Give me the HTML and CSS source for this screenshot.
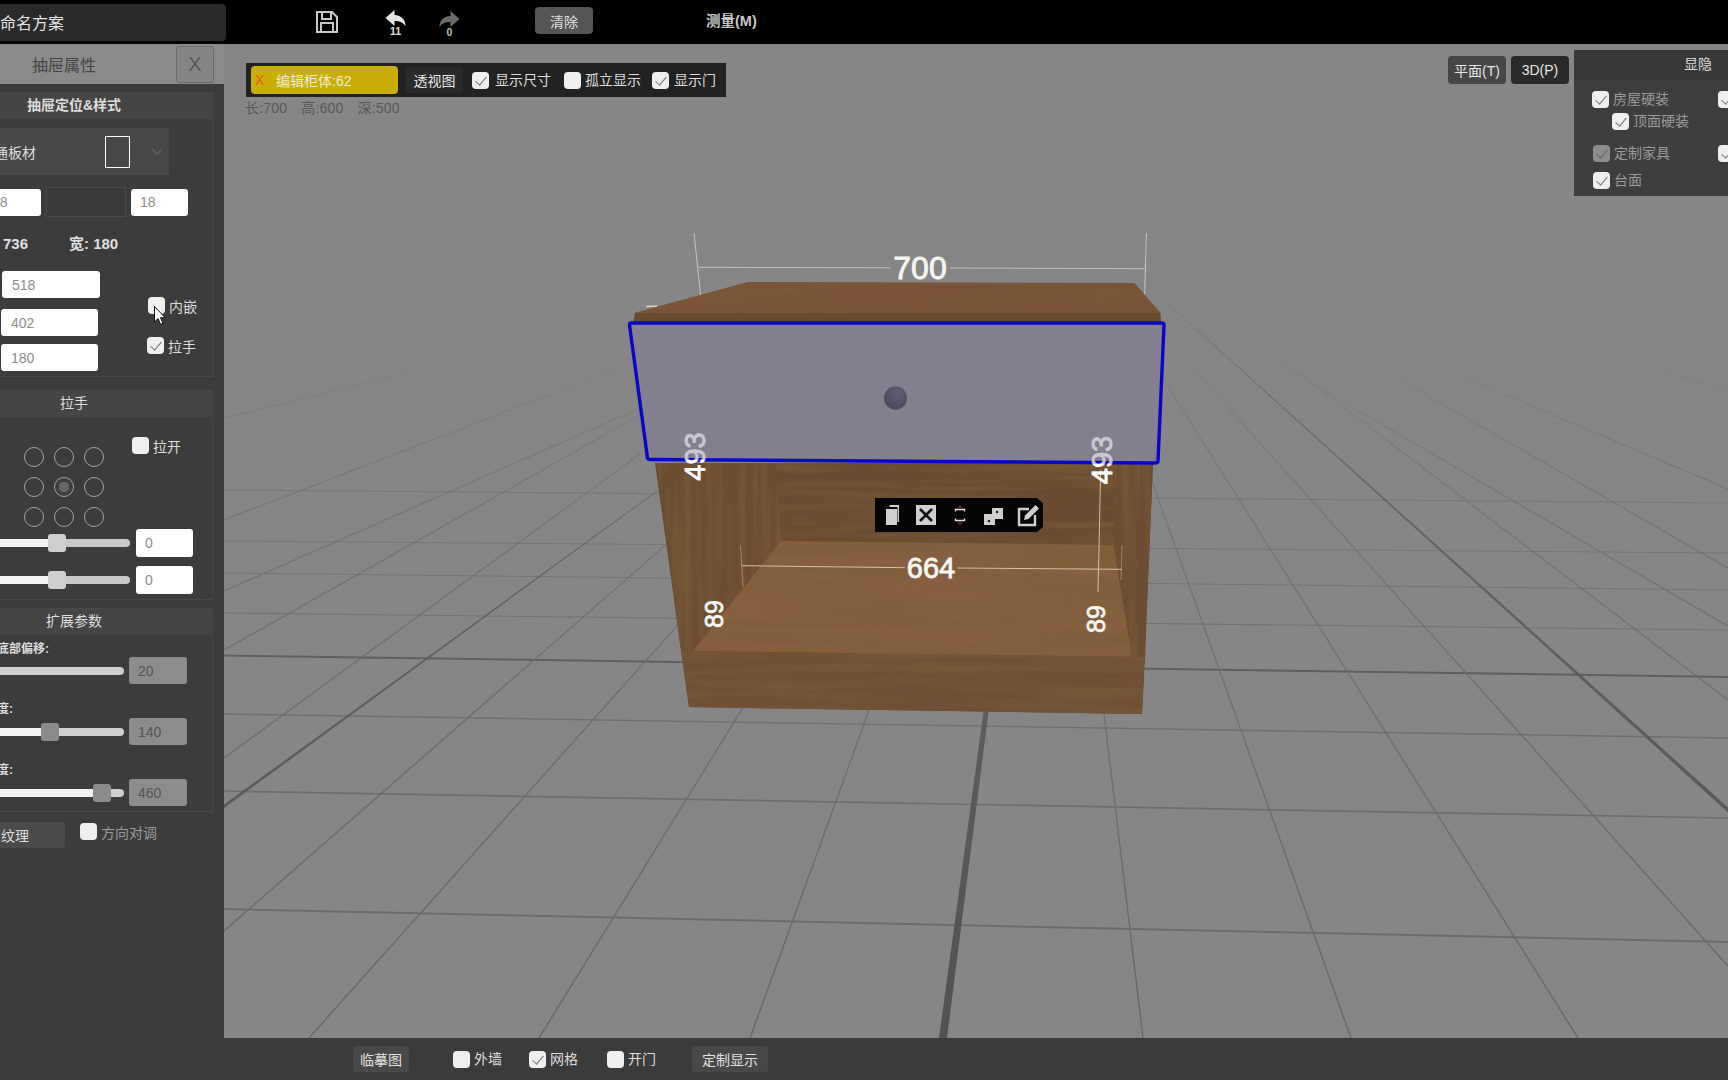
FILE: index.html
```html
<!DOCTYPE html>
<html lang="zh">
<head>
<meta charset="utf-8">
<title>抽屉属性</title>
<link rel="stylesheet" href="styles.css">
</head>
<body>
<div class="app">
  <header class="topbar">
    <div class="plan-name">命名方案</div>
    <svg class="ico-save" viewBox="0 0 22 22"><path d="M1 1H16L21 6V21H1Z M6 1V8H15V1 M5 21V12H17V21" fill="none" stroke="#c8c8c8" stroke-width="2"/></svg>
    <div class="history hist-undo">
      <svg viewBox="0 0 20 17"><path d="M0 8L9 0V5C15 5 20 9 20 16C17 12 14 11 9 11V16Z" fill="#e4e4e4"/></svg>
      <span>11</span>
    </div>
    <div class="history hist-redo">
      <svg viewBox="0 0 20 17"><path d="M20 8L11 0V5C5 5 0 9 0 16C3 12 6 11 11 11V16Z" fill="#6a6a6a"/></svg>
      <span>0</span>
    </div>
    <button class="btn-clear">清除</button>
    <div class="measure">测量(M)</div>
  </header>

  <aside class="panel">
    <div class="panel-title"><span>抽屉属性</span><button class="panel-close">X</button></div>
    <div class="panel-inner">
      <section class="sec sec-style">
        <h3 class="sec-head">抽屉定位&amp;样式</h3>
        <div class="select"><span>普通板材</span><i class="swatch"></i>
          <svg class="chev" viewBox="0 0 12 8"><path d="M1 1L6 6L11 1" fill="none" stroke="#5c5c5c" stroke-width="2"/></svg>
        </div>
        <div class="row-fields">
          <div class="field f-a">18</div>
          <div class="field-dark"></div>
          <div class="field f-b">18</div>
        </div>
        <div class="stats"><span class="st-a">长: 736</span><span class="st-b">宽: 180</span></div>
        <div class="dims">
          <div class="dims-col">
            <div class="field f-dim">518</div>
            <div class="field f-dim f-dim2">402</div>
            <div class="field f-dim f-dim3">180</div>
          </div>
          <div class="dims-checks">
            <label class="chk"><i class="cb"></i>内嵌</label>
            <label class="chk chk-shift"><i class="cb on"></i>拉手</label>
          </div>
        </div>
      </section>

      <section class="sec sec-handle">
        <h3 class="sec-head">拉手</h3>
        <div class="handle-top">
          <div class="dots">
            <i></i><i></i><i></i>
            <i></i><i class="sel"></i><i></i>
            <i></i><i></i><i></i>
          </div>
          <label class="chk chk-open"><i class="cb"></i>拉开</label>
        </div>
        <div class="slide-row sr-first">
          <div class="track"><b class="fill" style="width:122px"></b><i class="thumb" style="left:112px"></i></div>
          <div class="field f-small">0</div>
        </div>
        <div class="slide-row sr-second">
          <div class="track"><b class="fill" style="width:122px"></b><i class="thumb" style="left:112px"></i></div>
          <div class="field f-small">0</div>
        </div>
      </section>

      <section class="sec sec-ext">
        <h3 class="sec-head">扩展参数</h3>
        <div class="ext-label el-first">底部偏移:</div>
        <div class="slide-row ext-row">
          <div class="track t-ext"></div>
          <div class="field f-off">20</div>
        </div>
        <div class="ext-label el-short">高度:</div>
        <div class="slide-row ext-row">
          <div class="track t-ext"><b class="fill" style="width:105px"></b><i class="thumb dim" style="left:105px"></i></div>
          <div class="field f-off">140</div>
        </div>
        <div class="ext-label el-short">深度:</div>
        <div class="slide-row ext-row">
          <div class="track t-ext"><b class="fill" style="width:165px"></b><i class="thumb dim" style="left:157px"></i></div>
          <div class="field f-off">460</div>
        </div>
      </section>

      <div class="tex-row">
        <button class="btn-tex">纹理</button>
        <label class="chk chk-muted"><i class="cb"></i>方向对调</label>
      </div>
    </div>
    <svg class="cursor" viewBox="0 0 12 19"><path d="M0.5 0.5V16L4 12.6L6.6 18.4L9 17.3L6.5 11.7H11.2Z" fill="#fff" stroke="#111" stroke-width="1"/></svg>
  </aside>

  <main class="stage">
    <svg class="scene" viewBox="224 44 1504 994" preserveAspectRatio="none">
      <defs>
        <linearGradient id="gridFade" gradientUnits="userSpaceOnUse" x1="0" y1="330" x2="0" y2="1038">
          <stop offset="0" stop-color="#6c6c6c" stop-opacity="0"/>
          <stop offset=".22" stop-color="#6c6c6c" stop-opacity=".5"/>
          <stop offset=".5" stop-color="#6c6c6c" stop-opacity=".85"/>
          <stop offset="1" stop-color="#686868"/>
        </linearGradient>
        <linearGradient id="gridStrong" gradientUnits="userSpaceOnUse" x1="0" y1="300" x2="0" y2="1038">
          <stop offset="0" stop-color="#5a5a5a" stop-opacity=".2"/>
          <stop offset=".3" stop-color="#5a5a5a" stop-opacity=".8"/>
          <stop offset="1" stop-color="#515151"/>
        </linearGradient>
        <linearGradient id="behindL"><stop offset="0" stop-color="#fff"/><stop offset=".42" stop-color="#fff"/><stop offset=".42" stop-color="#c9c9d6"/><stop offset="1" stop-color="#c9c9d6"/></linearGradient>
        <radialGradient id="knob" cx=".6" cy=".3" r=".8"><stop offset="0" stop-color="#5f5e74"/><stop offset="1" stop-color="#46455a"/></radialGradient>
        <filter id="grainH" x="0" y="0" width="100%" height="100%">
          <feTurbulence type="fractalNoise" baseFrequency=".006 .11" numOctaves="3" seed="4"/>
          <feColorMatrix type="matrix" values="0 0 0 0 .2  0 0 0 0 .11  0 0 0 0 .04  1.4 0 0 0 -.48"/>
          <feComposite in2="SourceGraphic" operator="in" result="g"/>
          <feMerge><feMergeNode in="SourceGraphic"/><feMergeNode in="g"/></feMerge>
        </filter>
        <filter id="grainV" x="0" y="0" width="100%" height="100%">
          <feTurbulence type="fractalNoise" baseFrequency=".13 .006" numOctaves="3" seed="9"/>
          <feColorMatrix type="matrix" values="0 0 0 0 .2  0 0 0 0 .11  0 0 0 0 .04  1.4 0 0 0 -.48"/>
          <feComposite in2="SourceGraphic" operator="in" result="g"/>
          <feMerge><feMergeNode in="SourceGraphic"/><feMergeNode in="g"/></feMerge>
        </filter>
      </defs>

      <rect x="224" y="44" width="1504" height="994" fill="#868686"/>

      <g class="grid-h">
        <line x1="224" y1="414" x2="650" y2="417" stroke-width=".8" opacity=".45"/>
        <line x1="1220" y1="420" x2="1728" y2="424" stroke-width=".8" opacity=".45"/>
        <line x1="224" y1="490" x2="1728" y2="503" stroke-width="1.2"/>
        <line x1="224" y1="541" x2="1728" y2="553" stroke-width="1"/>
        <line x1="224" y1="573" x2="1728" y2="590" stroke-width="1"/>
        <line x1="224" y1="613" x2="1728" y2="630" stroke-width="1.1"/>
        <line x1="224" y1="655.5" x2="1728" y2="677" stroke-width="2" class="dark"/>
        <line x1="224" y1="714" x2="1728" y2="738" stroke-width="1.4"/>
        <line x1="224" y1="791" x2="1728" y2="818" stroke-width="1.7"/>
        <line x1="224" y1="909" x2="1728" y2="942" stroke-width="2"/>
      </g>
      <g class="grid-r">
        <line x1="309" y1="1038" x2="700" y2="600"/>
        <line x1="539" y1="1038" x2="760" y2="680"/>
        <line x1="750" y1="1038" x2="880" y2="680"/>
        <line x1="1143" y1="1038" x2="1100" y2="680"/>
        <line x1="224" y1="931" x2="700" y2="515"/>
        <line x1="224" y1="758" x2="640" y2="454"/>
        <line x1="224" y1="650" x2="640" y2="415"/>
        <line x1="224" y1="591" x2="640" y2="408"/>
        <line x1="224" y1="520" x2="640" y2="360"/>
        <line x1="224" y1="418" x2="491" y2="352"/>
        <line x1="1351" y1="1038" x2="1130" y2="420"/>
        <line x1="1578" y1="1038" x2="1150" y2="358"/>
        <line x1="1728" y1="966" x2="1168" y2="340"/>
        <line x1="1728" y1="700" x2="1275" y2="355"/>
        <line x1="1728" y1="626" x2="1263" y2="355"/>
        <line x1="1728" y1="568" x2="1400" y2="380"/>
        <line x1="1728" y1="489" x2="1298" y2="307"/>
        <line x1="1728" y1="390" x2="1588" y2="350"/>
      </g>
      <polygon class="strong" points="224,804.5 224,808 657,491.4 657,490.6"/>
      <polygon class="strong" points="1728,807.5 1728,812.5 1164,300.4 1164,299.6"/>
      <polygon class="strong" points="939,1038 947,1038 988.5,712 983.5,712"/>

      <!-- top dimension -->
      <g class="dim-line">
        <line x1="694" y1="233" x2="700.6" y2="295"/>
        <line x1="1146.4" y1="233" x2="1144.6" y2="295"/>
        <line x1="698.8" y1="267.3" x2="890" y2="267.8"/>
        <line x1="950" y1="268" x2="1144.6" y2="268.7"/>
      </g>

      <!-- cabinet -->
      <polygon points="655,463 1153,463 1142,714 689,707" fill="#6a4b30"/>
      <polygon points="776,463 1115,463 1113.5,545 781,541" fill="#6b4c30" filter="url(#grainH)"/>
      <polygon points="657,463 776,463 781,541 693,651 681,651" fill="#6c4d31" filter="url(#grainV)"/>
      <polygon points="1115,463 1153,463 1145,657 1132,657 1113.5,545" fill="#6d4e32" filter="url(#grainV)"/>
      <polygon points="781,541 1113.5,545 1132,657 693,651" fill="#86613f" filter="url(#grainH)"/>
      <polygon points="681,651 1145,657 1142,714 689,707" fill="#6f5034" filter="url(#grainH)"/>
      <polygon points="748,282 1134.6,283 1160.5,313 635,312.7" fill="#7a5337" filter="url(#grainH)"/>
      <polygon points="635,312.7 1160.5,313 1161,325 633,324" fill="#6a4a2d"/>
      <line x1="646" y1="306.5" x2="657" y2="306" stroke="#d8d2c8" stroke-width="1.5"/>

      <!-- inner dimension -->
      <g class="dim-wood">
        <line x1="741.6" y1="565.7" x2="905" y2="567.7"/>
        <line x1="957" y1="568" x2="1122" y2="569.3"/>
        <line class="faint" x1="740.5" y1="545" x2="743" y2="587"/>
        <line class="faint" x1="1122" y1="545" x2="1121" y2="580"/>
        <line x1="1100.7" y1="470" x2="1098" y2="592"/>
      </g>

      <!-- selected drawer -->
      <path d="M631 323H1162Q1164 323 1164 325L1158 461Q1158 463 1155 463L650 459.5Q648 459.5 647.5 458L629.5 325Q629.5 323 631 323Z" fill="#82808f" stroke="#0808c4" stroke-width="3.4" stroke-linejoin="round"/>
      <ellipse cx="895.5" cy="398" rx="11.5" ry="11.8" fill="url(#knob)"/>

      <text class="dim-text" x="920" y="279" font-size="32">700</text>
      <text class="dim-text" x="931" y="578" font-size="29">664</text>
      <text class="dim-text" font-size="29" fill="url(#behindL)" transform="translate(704.5 456.5) rotate(-90)">493</text>
      <text class="dim-text" font-size="29" fill="url(#behindL)" transform="translate(1111.5 460) rotate(-90)">493</text>
      <text class="dim-text" font-size="25" transform="translate(723 614) rotate(-90)">89</text>
      <text class="dim-text" font-size="25" transform="translate(1105 619) rotate(-90)">89</text>

      <!-- floating object toolbar -->
      <path d="M875 498H1037L1043 503V527L1037 532H875Z" fill="#050505"/>
      <g class="obj-ico">
        <rect x="886" y="509" width="11" height="16" fill="#cfcfcf"/>
        <path d="M889.5 507V505H899V522H897.5V507Z" fill="#cfcfcf"/>
        <rect x="916" y="505" width="20" height="20" fill="#cfcfcf"/>
        <path d="M920 509L932 521M932 509L920 521" stroke="#111" stroke-width="2.6" fill="none"/>
        <path d="M960 504.5L957 508H963Z M960 525.5L957 522H963Z" fill="#5c1f23"/>
        <path d="M955.5 511.5V509.5H964.5V511.5M955.5 518.5V520.5H964.5V518.5" stroke="#ddd" stroke-width="1.4" fill="none"/>
        <rect x="984" y="514" width="11" height="11" fill="#cfcfcf"/>
        <rect x="992" y="508" width="11" height="11" fill="#cfcfcf"/>
        <circle cx="989" cy="521" r="1.2" fill="#111"/><circle cx="997" cy="512" r="1.2" fill="#111"/>
        <path d="M1029 509H1019V525H1035V515" stroke="#cfcfcf" stroke-width="2.4" fill="none"/>
        <path d="M1024 520L1025 515.5L1035.5 505L1039 508.5L1028.5 519Z" fill="#cfcfcf"/>
      </g>
    </svg>

    <div class="edit-bar">
      <div class="edit-tag"><span class="tag-x">X</span><span>编辑柜体:62</span></div>
      <button class="btn-persp">透视图</button>
      <label class="chk chk-a"><i class="cb on"></i>显示尺寸</label>
      <label class="chk chk-b"><i class="cb"></i>孤立显示</label>
      <label class="chk chk-c"><i class="cb on"></i>显示门</label>
    </div>
    <div class="sizes"><span>长:700</span><span>高:600</span><span>深:500</span></div>

    <div class="view-btns">
      <button class="view-btn">平面(T)</button>
      <button class="view-btn active">3D(P)</button>
    </div>

    <div class="vis-panel">
      <h4 class="vis-head">显隐</h4>
      <div class="vis-row vr-1"><label class="chk chk-muted"><i class="cb on"></i>房屋硬装</label><i class="cb on vis-next"></i></div>
      <div class="vis-row vr-2"><label class="chk chk-muted"><i class="cb on"></i>顶面硬装</label></div>
      <div class="vis-row vr-3"><label class="chk chk-muted"><i class="cb on off"></i>定制家具</label><i class="cb on vis-next"></i></div>
      <div class="vis-row vr-4"><label class="chk chk-muted"><i class="cb on"></i>台面</label></div>
    </div>
  </main>

  <footer class="bottombar">
    <button class="btn-foot b-trace">临摹图</button>
    <label class="chk f-wall"><i class="cb"></i>外墙</label>
    <label class="chk f-grid"><i class="cb on"></i>网格</label>
    <label class="chk f-door"><i class="cb"></i>开门</label>
    <button class="btn-foot b-custom">定制显示</button>
  </footer>
</div>
</body>
</html>
```
FILE: styles.css
```css
* { box-sizing: border-box; }
html, body { margin: 0; height: 100%; }
body {
  background: #3c3c3c;
  overflow: hidden;
  font-family: "Liberation Sans", "Noto Sans CJK SC", sans-serif;
  color: #ddd;
}
button { font: inherit; border: 0; padding: 0; }
h3, h4 { margin: 0; }

.app {
  width: 1728px;
  height: 1080px;
  display: grid;
  grid-template-columns: 224px 1fr;
  grid-template-rows: 44px 1fr 42px;
}

/* top bar */
.topbar {
  grid-column: 1 / 3;
  background: #000;
  display: flex;
  align-items: center;
}
.plan-name {
  width: 226px;
  height: 37px;
  background: #2a2a2a;
  border-radius: 0 4px 4px 0;
  font-size: 16px;
  line-height: 39px;
  color: #e4e4e4;
}
.ico-save { width: 22px; height: 22px; margin-left: 90px; }
.history {
  display: flex;
  flex-direction: column;
  align-items: center;
  width: 21px;
  font-size: 10.5px;
  font-weight: bold;
  line-height: 10px;
}
.history svg { width: 21px; height: 17px; display: block; }
.hist-undo { margin-left: 47px; margin-top: 1px; }
.hist-undo span { margin-top: -1px; color: #e0e0e0; }
.hist-redo { margin-left: 33px; margin-top: 4px; }
.hist-redo span { margin-top: -1px; color: #bbb; }
.btn-clear {
  margin-left: 75px;
  margin-bottom: 3px;
  width: 58px;
  height: 27px;
  background: #555;
  border-radius: 4px;
  color: #e0e0e0;
  font-size: 14px;
}
.measure { margin-left: 113px; margin-bottom: 5px; font-size: 14.5px; font-weight: bold; color: #c6c6c6; }

/* left panel */
.panel { position: relative; background: #3c3c3c; overflow: hidden; grid-row: 2 / 4; z-index: 2; }
.panel-title {
  height: 40px;
  background: #8a8a8a;
  display: flex;
  align-items: center;
  padding-left: 32px;
  font-size: 16px;
  color: #454545;
}
.panel-close {
  margin-left: auto;
  margin-right: 10px;
  width: 38px;
  height: 37px;
  background: #858585;
  border: 1px solid #6b6b6b;
  border-radius: 3px;
  color: #555;
  font-size: 20px;
}
.panel-inner { margin-left: -65px; width: 278px; padding-top: 8px; }
.sec { border: 1px solid #484848; }
.sec-style { height: 285px; }
.sec-handle { height: 210px; margin-top: 13px; }
.sec-ext { height: 204px; margin-top: 8px; }
.sec-head {
  height: 26px;
  background: #454545;
  text-align: center;
  font-size: 14px;
  line-height: 24px;
  font-weight: bold;
  color: #ddd;
}
.sec-handle .sec-head, .sec-ext .sec-head { font-weight: normal; }

.select {
  margin-top: 9px;
  width: 233px;
  height: 47px;
  background: #484848;
  border-radius: 3px;
  display: flex;
  align-items: center;
  padding-left: 44px;
  font-size: 14px;
  color: #ddd;
}
.select span { width: 56px; }
.swatch { width: 25px; height: 32px; margin-left: 69px; border: 1px solid #fff; }
.chev { width: 12px; height: 8px; margin-left: 21px; }

.field {
  background: #fff;
  border-radius: 3px;
  color: #8d8d8d;
  font-size: 14px;
  display: flex;
  align-items: center;
}
.row-fields { display: flex; align-items: center; margin-top: 12px; margin-left: 34px; }
.f-a { width: 71px; height: 27px; padding-left: 22px; }
.field-dark { width: 80px; height: 30px; margin-left: 5px; background: #3a3a3a; border: 1px solid #4b4b4b; }
.f-b { width: 57px; height: 27px; margin-left: 5px; padding-left: 9px; }
.stats { display: flex; margin-top: 17px; height: 20px; line-height: 20px; font-size: 15px; font-weight: bold; color: #e0e0e0; }
.st-a { width: 92px; text-align: right; }
.st-b { margin-left: 41px; }
.dims { display: flex; margin-top: 17px; margin-left: 66px; }
.dims-col { width: 98px; }
.f-dim { width: 98px; height: 27px; padding-left: 10px; }
.f-dim2 { margin-top: 11px; margin-left: -1px; width: 97px; }
.f-dim3 { margin-top: 8px; margin-left: -1px; width: 97px; }
.dims-checks { margin-left: 48px; padding-top: 26px; display: flex; flex-direction: column; gap: 23px; }
.chk-shift { margin-left: -1px; }

.chk { display: inline-flex; align-items: center; gap: 4px; font-size: 14px; color: #ddd; white-space: nowrap; height: 17px; line-height: 15px; }
.panel .chk { line-height: normal; }
.chk-muted { color: #9a9a9a; }
.cb {
  position: relative;
  display: inline-block;
  flex: none;
  width: 17px;
  height: 17px;
  background: #efefef;
  border-radius: 4px;
}
.cb.on::after {
  content: "";
  position: absolute;
  left: 6px;
  top: 2px;
  width: 5px;
  height: 10px;
  border: solid #777;
  border-width: 0 1px 1px 0;
  transform: rotate(40deg);
}
.cb.off { background: #8c8c8c; }
.cb.off::after { border-color: #666; }

.handle-top { display: flex; align-items: flex-start; margin-top: 20px; margin-left: 88px; }
.dots { display: grid; grid-template-columns: repeat(3, 20px); gap: 10px; margin-top: 10px; }
.dots i { width: 20px; height: 20px; border: 1px solid #a5a5a5; border-radius: 50%; display: block; }
.dots .sel { background: radial-gradient(circle, #666 0 5px, transparent 5.5px); }
.chk-open { margin-left: 28px; }

.slide-row { display: flex; align-items: center; }
.sr-first { margin-top: 2px; }
.sr-second { margin-top: 9px; }
.track { position: relative; width: 194px; height: 8px; background: #c9c9c9; border-radius: 0 4px 4px 0; }
.fill { position: absolute; left: 0; top: 0; height: 8px; background: #f2f2f2; }
.thumb { position: absolute; top: -5px; width: 18px; height: 18px; background: #cfcfcf; border-radius: 3px; }
.thumb.dim { background: #8b8b8b; }
.f-small { width: 57px; height: 28px; margin-left: 6px; padding-left: 9px; font-size: 14px; }

.ext-label { font-size: 12px; font-weight: bold; line-height: 16px; color: #ddd; }
.el-first { margin-top: 6px; padding-left: 61px; }
.el-short { margin-top: 17px; padding-left: 49px; }
.ext-row { margin-top: 0; }
.t-ext { width: 188px; background: #cfcfcf; }
.f-off { width: 58px; height: 27px; margin-left: 5px; padding-left: 9px; background: #8c8c8c; color: #555; }
.el-short + .ext-row { margin-top: 1px; }

.tex-row { display: flex; align-items: flex-start; margin-top: 10px; }
.btn-tex { width: 130px; height: 26px; padding-left: 66px; text-align: left; background: #4a4a4a; border-radius: 3px; color: #ddd; font-size: 14px; }
.tex-row .chk { margin-left: 15px; margin-top: 1px; }

.cursor { position: absolute; left: 154px; top: 262px; width: 12px; height: 19px; }

/* stage */
.stage { position: relative; overflow: hidden; }
.scene { position: absolute; left: 0; top: 0; width: 1504px; height: 994px; display: block; }
.grid-h line { stroke: url(#gridFade); }
.grid-h line.dark { stroke: url(#gridStrong); }
.grid-r line { stroke: url(#gridFade); stroke-width: 1.5; }
.strong { fill: url(#gridStrong); }
.dim-line line { stroke: #c4c4c4; stroke-width: 1; }
.dim-wood line { stroke: #d8bf9e; stroke-width: 1; }
.dim-wood line.faint { opacity: .45; }
.dim-text {
  font-family: "Liberation Sans", sans-serif;
  text-anchor: middle;
  fill: #f6f6f2;
  stroke: #f6f6f2;
  stroke-width: .8;
}
.dim-text[fill] { fill: url(#behindL); stroke: url(#behindL); }

.edit-bar {
  position: absolute;
  left: 22px;
  top: 19px;
  width: 480px;
  height: 34px;
  background: #222;
  display: flex;
  align-items: center;
  padding-left: 5px;
}
.edit-tag {
  width: 147px;
  height: 28px;
  background: #c9ae07;
  border-radius: 4px;
  display: flex;
  align-items: center;
  font-size: 14px;
  color: #f0ecd0;
}
.tag-x { color: #e8591a; margin: 0 9px 0 4px; font-size: 14px; width: 12px; }
.btn-persp { width: 57px; height: 26px; margin-left: 8px; background: #2b2b2b; border-radius: 3px; color: #e4e4e4; font-size: 14px; }
.chk-a { margin-left: 9px; gap: 6px; }
.chk-b { margin-left: 13px; }
.chk-c { margin-left: 11px; gap: 5px; }
.sizes { position: absolute; left: 21px; top: 56px; display: flex; gap: 14px; font-size: 14px; letter-spacing: .2px; line-height: 16px; color: #575757; }

.view-btns { position: absolute; left: 1224px; top: 12px; display: flex; gap: 5px; }
.view-btn { width: 58px; height: 28px; background: #464646; border-radius: 4px; color: #e6e6e6; font-size: 14px; }
.view-btn.active { background: #2a2a2a; }

.vis-panel { position: absolute; left: 1350px; top: 6px; width: 154px; height: 146px; background: #3e3e3e; overflow: hidden; }
.vis-head { height: 30px; background: #383838; padding-left: 110px; font-size: 14px; line-height: 29px; font-weight: normal; color: #ddd; }
.vis-row { display: flex; align-items: center; height: 17px; }
.vr-1 { margin-top: 11px; padding-left: 18px; }
.vr-2 { margin-top: 5px; padding-left: 38px; }
.vr-3 { margin-top: 15px; padding-left: 19px; }
.vr-4 { margin-top: 10px; padding-left: 19px; }
.vis-next { position: absolute; left: 144px; }

/* bottom */
.bottombar { grid-column: 2; background: #3b3b3b; display: flex; align-items: center; margin-left: -224px; padding-left: 353px; }
.btn-foot { height: 26px; background: #484848; border-radius: 3px; color: #e2e2e2; font-size: 14px; }
.b-trace { width: 56px; }
.b-custom { width: 76px; margin-left: 36px; }
.f-wall { margin-left: 44px; }
.f-grid { margin-left: 27px; }
.f-door { margin-left: 29px; }
```
